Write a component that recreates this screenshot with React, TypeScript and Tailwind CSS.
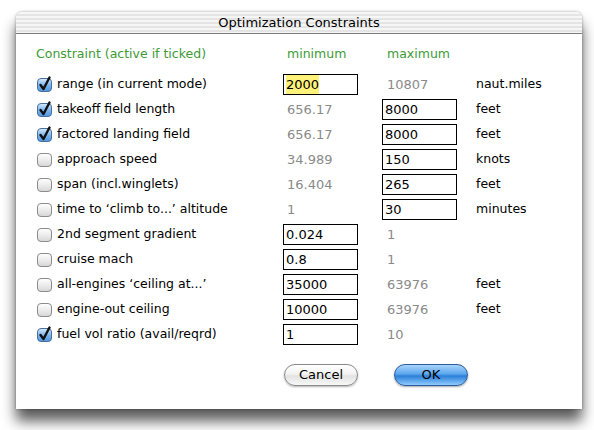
import React from 'react';

type Row = {
  label: string;
  checked: boolean;
  min: string;
  minInput?: boolean;
  max: string;
  maxInput?: boolean;
  unit?: string;
  selected?: boolean;
};

const rows: Row[] = [
  { label: 'range (in current mode)', checked: true, min: '2000', minInput: true, max: '10807', unit: 'naut.miles', selected: true },
  { label: 'takeoff field length', checked: true, min: '656.17', max: '8000', maxInput: true, unit: 'feet' },
  { label: 'factored landing field', checked: true, min: '656.17', max: '8000', maxInput: true, unit: 'feet' },
  { label: 'approach speed', checked: false, min: '34.989', max: '150', maxInput: true, unit: 'knots' },
  { label: 'span (incl.winglets)', checked: false, min: '16.404', max: '265', maxInput: true, unit: 'feet' },
  { label: 'time to \u2018climb to...\u2019 altitude', checked: false, min: '1', max: '30', maxInput: true, unit: 'minutes' },
  { label: '2nd segment gradient', checked: false, min: '0.024', minInput: true, max: '1' },
  { label: 'cruise mach', checked: false, min: '0.8', minInput: true, max: '1' },
  { label: 'all-engines \u2018ceiling at...\u2019', checked: false, min: '35000', minInput: true, max: '63976', unit: 'feet' },
  { label: 'engine-out ceiling', checked: false, min: '10000', minInput: true, max: '63976', unit: 'feet' },
  { label: 'fuel vol ratio (avail/reqrd)', checked: true, min: '1', minInput: true, max: '10' },
];

function Checkbox({ checked }: { checked: boolean }) {
  return (
    <svg width="15" height="15" viewBox="0 0 15 15" className="shrink-0 overflow-visible">
      <defs>
        <linearGradient id="cbOff" x1="0" y1="0" x2="0" y2="1">
          <stop offset="0" stopColor="#ffffff" />
          <stop offset="0.5" stopColor="#ececec" />
          <stop offset="1" stopColor="#d6d6d6" />
        </linearGradient>
        <linearGradient id="cbOn" x1="0" y1="0" x2="0" y2="1">
          <stop offset="0" stopColor="#d6ecff" />
          <stop offset="0.5" stopColor="#7fb6ee" />
          <stop offset="1" stopColor="#4f95e0" />
        </linearGradient>
      </defs>
      <rect x="0.5" y="1.5" width="14" height="13" rx="3.5" fill={checked ? 'url(#cbOn)' : 'url(#cbOff)'} stroke={checked ? '#4a6f9a' : '#8c8c8c'} strokeWidth="1" />
      {checked && (
        <path d="M3.5 8 L6.5 12 L12.5 0.5" fill="none" stroke="#111" strokeWidth="2.4" strokeLinecap="round" strokeLinejoin="round" />
      )}
    </svg>
  );
}

function Field({ value, selected }: { value: string; selected?: boolean }) {
  return (
    <div className="w-[75px] h-[21px] border border-black bg-white flex items-center pl-[2px] text-black text-[13px]">
      <span className={selected ? 'bg-[#fff27a]' : ''}>{value}</span>
    </div>
  );
}

export default function App() {
  return (
    <div className="w-[594px] h-[430px] bg-white pt-[12px] pl-[16px] font-['DejaVu_Sans',sans-serif] text-[12.5px]">
      <div className="w-[566px] h-[397px] bg-white rounded-t-[6px] shadow-[0_12px_14px_rgba(0,0,0,0.65),0_0_3px_rgba(0,0,0,0.35)] flex flex-col">
        {/* title bar */}
        <div className="h-[22px] rounded-t-[6px] border-b border-[#7a7a7a] bg-[repeating-linear-gradient(to_bottom,#f6f6f6_0px,#f6f6f6_2px,#e4e4e4_2px,#e4e4e4_4px)] flex items-center justify-center text-black text-[13px]">
          Optimization Constraints
        </div>

        <div className="pl-[20px] pt-[8px]">
          {/* header */}
          <div className="grid grid-cols-[247px_99px_94px_1fr] h-[25px] items-center text-[#3d9b35] mb-[5px]">
            <div>Constraint (active if ticked)</div>
            <div className="pl-[4px]">minimum</div>
            <div className="pl-[5px]">maximum</div>
            <div />
          </div>

          {rows.map((r, i) => (
            <div key={i} className="grid grid-cols-[247px_99px_94px_1fr] h-[25px] items-center">
              <div className="flex items-center gap-[5px] pl-[1px] text-black">
                <Checkbox checked={r.checked} />
                <span>{r.label}</span>
              </div>
              <div>
                {r.minInput ? <Field value={r.min} selected={r.selected} /> : <span className="pl-[4px] text-[#8a8a8a] text-[13px]">{r.min}</span>}
              </div>
              <div>
                {r.maxInput ? <Field value={r.max} /> : <span className="pl-[5px] text-[#8a8a8a] text-[13px]">{r.max}</span>}
              </div>
              <div className="text-black">{r.unit}</div>
            </div>
          ))}

          {/* buttons */}
          <div className="flex pl-[248px] gap-[36px] mt-[17px]">
            <button className="w-[74px] h-[22px] rounded-full border border-[#8a8a8a] bg-[linear-gradient(to_bottom,#ffffff_0%,#f2f2f2_45%,#e2e2e2_55%,#f8f8f8_100%)] shadow-[0_1px_2px_rgba(0,0,0,0.3)] text-black text-[13px]">
              Cancel
            </button>
            <button className="w-[74px] h-[22px] rounded-full border border-[#2b5c9c] bg-[linear-gradient(to_bottom,#a9d4fb_0%,#5aa6ee_45%,#2b7fd8_55%,#8fcaff_100%)] shadow-[0_1px_2px_rgba(0,0,0,0.35)] text-black text-[13px]">
              OK
            </button>
          </div>
        </div>
      </div>
    </div>
  );
}
